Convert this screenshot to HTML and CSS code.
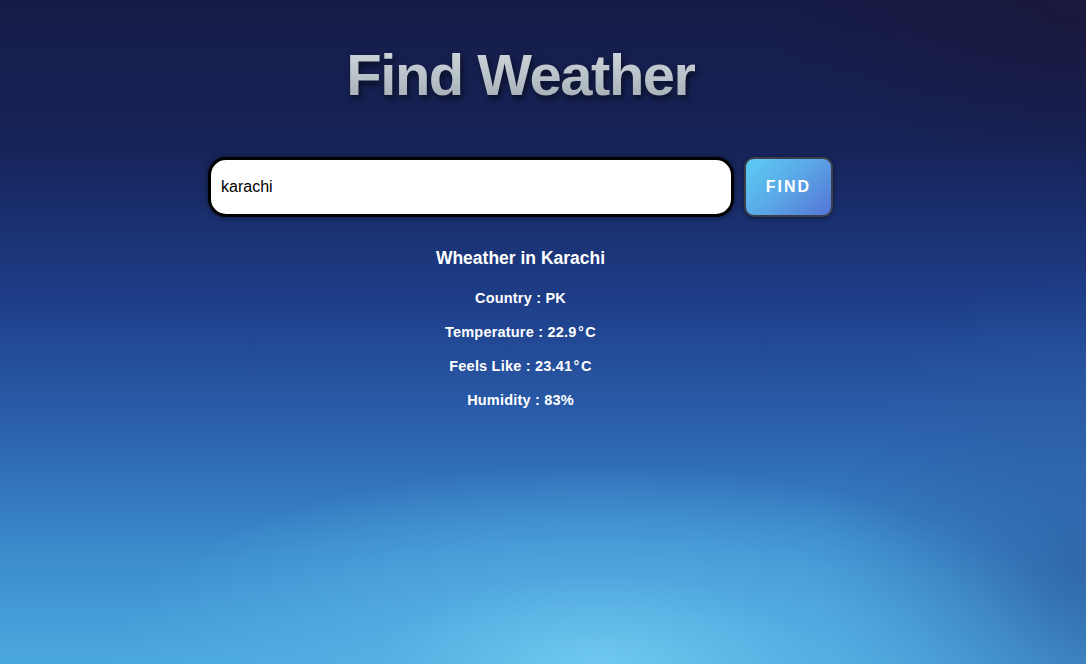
FILE: index.html
```html
<!DOCTYPE html>
<html>
<head>
<meta charset="utf-8">
<link rel="stylesheet" href="styles.css">
</head>
<body>
<main class="app">
  <h1 class="title">Find Weather</h1>
  <form class="search">
    <input class="search-input" type="text" value="karachi">
    <button class="search-btn" type="button">FIND</button>
  </form>
  <section class="result">
    <h2 class="result-title">Wheather in Karachi</h2>
    <p class="result-line">Country : PK</p>
    <p class="result-line">Temperature : 22.9&#8202;&deg;&#8202;C</p>
    <p class="result-line">Feels Like : 23.41&#8202;&deg;&#8202;C</p>
    <p class="result-line">Humidity : 83%</p>
  </section>
</main>
</body>
</html>
```

FILE: styles.css
```css
html, body {
  margin: 0;
  height: 100%;
}
body {
  background:
    radial-gradient(ellipse 45% 30% at 55% 100%, rgba(112,202,240,0.95) 0%, rgba(90,180,230,0.6) 45%, rgba(70,150,215,0) 100%),
    radial-gradient(ellipse 25% 45% at 100% 85%, rgba(44,92,160,0.75) 0%, rgba(44,92,160,0) 100%),
    radial-gradient(ellipse 30% 25% at 100% 0%, rgba(26,24,60,0.9) 0%, rgba(26,24,60,0) 100%),
    linear-gradient(180deg, #161c47 0%, #162358 22%, #1e3d88 45%, #2c62b0 65%, #3a89cb 82%, #4ba9de 100%);
  font-family: "Liberation Sans", Arial, sans-serif;
  overflow: hidden;
}
.app {
  display: flex;
  flex-direction: column;
  align-items: center;
  padding-right: 45px;
}
.title {
  margin: 40px 0 0;
  font-size: 58px;
  font-weight: 700;
  line-height: 70px;
  letter-spacing: -1.5px;
  background: linear-gradient(180deg, #d7dde2 0%, #b8c1c8 55%, #9ea7ae 100%);
  -webkit-background-clip: text;
  background-clip: text;
  color: transparent;
  filter: drop-shadow(2px 4px 3px rgba(0,0,0,0.55));
}
.search {
  display: flex;
  gap: 10px;
  margin-top: 47px;
}
.search-input {
  box-sizing: border-box;
  width: 526px;
  height: 60px;
  border: 3px solid #000;
  border-radius: 18px;
  padding: 0 10px;
  font-family: "Liberation Sans", Arial, sans-serif;
  font-size: 16px;
  color: #000;
  background: #fff;
  box-shadow: 0 0 6px rgba(0,0,0,0.5);
  outline: none;
}
.search-btn {
  box-sizing: border-box;
  width: 89px;
  height: 60px;
  border: 2px solid #3a3f4a;
  border-radius: 10px;
  background: linear-gradient(135deg, #5ccdf3 0%, #5aa6e6 50%, #5574d6 100%);
  color: #fff;
  font-family: "Liberation Sans", Arial, sans-serif;
  font-weight: 700;
  font-size: 16px;
  letter-spacing: 2px;
  box-shadow: 0 1px 4px rgba(0,0,0,0.5);
}
.result {
  display: flex;
  flex-direction: column;
  align-items: center;
  color: #fff;
  margin-top: 30px;
}
.result-title {
  margin: 0 0 12px;
  font-size: 17.5px;
  font-weight: 700;
  line-height: 22px;
}
.result-line {
  margin: 0;
  font-size: 14.5px;
  font-weight: 700;
  line-height: 34px;
  letter-spacing: 0.2px;
}
```
